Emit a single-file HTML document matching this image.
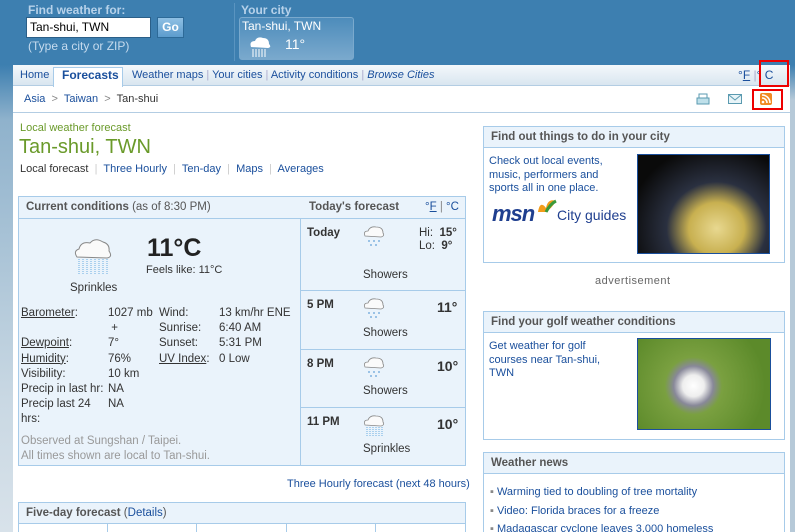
<!DOCTYPE html>
<html><head><meta charset="utf-8"><style>
*{margin:0;padding:0;box-sizing:border-box}
html,body{width:795px;height:532px;overflow:hidden}
body{position:relative;background:#fff;font-family:"Liberation Sans",Tahoma,sans-serif;font-size:11px;color:#333}
.a{position:absolute;white-space:nowrap}
a,.l{color:#1a4f9c;text-decoration:none}
u{text-decoration:underline}
.box{position:absolute;border:1px solid #a7cbe9;background:#fff}
.hd{background:#eaf3fb;border-bottom:1px solid #a7cbe9;height:21px;font-weight:bold;color:#555;font-size:11.5px;padding:4px 7px}
.cloud{position:absolute}
</style></head><body>
<div class="a" style="left:0;top:0;width:13px;height:532px;background:linear-gradient(#3d7fb0 0,#3d7fb0 65px,#8fb2cc 120px,#c9d8e3 400px,#d8e2ea 532px)"></div>
<div class="a" style="left:790px;top:0;width:5px;height:532px;background:linear-gradient(#3d7fb0 0,#3d7fb0 65px,#b6c9d8 100px)"></div>
<div class="a" style="left:13px;top:0;width:777px;height:65px;background:#3d7fb0"></div>
<div class="a" style="left:28px;top:3px;color:#b7d2ea;font-weight:bold;font-size:12px">Find weather for:</div>
<div class="a" style="left:26px;top:17px;width:125px;height:21px;background:#fff;border:1px solid #2b5f88;padding:2px 3px;font-size:12px;color:#000">Tan-shui, TWN</div>
<div class="a" style="left:157px;top:17px;width:27px;height:21px;background:linear-gradient(#8fc0e4,#5c9ccd);border:1px solid #2d6a98;color:#fff;font-weight:bold;font-size:12px;text-align:center;line-height:19px">Go</div>
<div class="a" style="left:28px;top:39px;color:#c6dbee;font-size:12px">(Type a city or ZIP)</div>
<div class="a" style="left:234px;top:3px;width:1px;height:58px;background:#5a94c0"></div>
<div class="a" style="left:241px;top:3px;color:#b7d2ea;font-weight:bold;font-size:12px">Your city</div>
<div class="a" style="left:239px;top:17px;width:115px;height:43px;border:1px solid #7aa9cd;border-radius:3px;background:linear-gradient(#4d8cbb,#7aa9cd)"></div>
<div class="a" style="left:242px;top:19px;color:#fff;font-size:12px">Tan-shui, TWN</div>
<div class="a" style="left:285px;top:36px;color:#fff;font-size:14px">11°</div>
<svg class="cloud" style="left:248px;top:36px" width="24" height="22"><path d="M3 11 Q1 5 7 5 Q9 0 15 2 Q21 2 21 8 Q24 11 20 12 Z" fill="#fff"/><g stroke="#fff" stroke-width="1"><path d="M5 13v8M8 13v8M11 13v8M14 13v8M17 13v8"/></g></svg>
<div class="a" style="left:13px;top:65px;width:777px;height:21px;background:linear-gradient(#f4f8fb,#d9e6f0);border-bottom:1px solid #b3cde3"></div>
<div class="a" style="left:53px;top:67px;width:70px;height:20px;background:#fff;border:1px solid #a7cbe9;border-bottom:none"></div>
<div class="a" style="top:69px;left:20px;font-size:11px;color:#1a4f9c">Home</div>
<div class="a" style="top:68px;left:62px;font-size:12px;font-weight:bold;color:#1a4f9c">Forecasts</div>
<div class="a" style="top:69px;left:132px;font-size:11px;color:#1a4f9c;word-spacing:0">Weather maps <span style="color:#aac">|</span> Your cities <span style="color:#aac">|</span> Activity conditions <span style="color:#aac">|</span> <i>Browse Cities</i></div>
<div class="a" style="top:68px;left:738px;font-size:12px;color:#1a4f9c">°<u>F</u> <span style="color:#aac">|</span>° C</div>
<div class="a" style="left:759px;top:60px;width:30px;height:27px;border:2px solid #e00"></div>
<div class="a" style="top:93px;left:24px;font-size:11px"><span class="l">Asia</span> <span style="color:#888">&nbsp;&gt;&nbsp;</span> <span class="l">Taiwan</span> <span style="color:#888">&nbsp;&gt;&nbsp;</span> Tan-shui</div>
<div class="a" style="left:13px;top:112px;width:777px;height:1px;background:#b3cde3"></div>
<svg class="a" style="left:696px;top:93px" width="14" height="12"><rect x="3" y="1" width="8" height="4" fill="#fff" stroke="#5a9ab0"/><rect x="1" y="5" width="12" height="6" fill="#bfe0ea" stroke="#5a9ab0"/></svg>
<svg class="a" style="left:728px;top:94px" width="14" height="10"><rect x=".5" y=".5" width="13" height="9" fill="#e8f4f8" stroke="#5a9ab0"/><path d="M1 1l6 5 6-5" fill="none" stroke="#5a9ab0"/></svg>
<div class="a" style="left:752px;top:89px;width:31px;height:21px;border:2px solid #e00"></div>
<svg class="a" style="left:760px;top:93px" width="12" height="12"><rect width="12" height="12" rx="2" fill="#f08a24"/><circle cx="3" cy="9" r="1.3" fill="#fff"/><path d="M2 5a5 5 0 0 1 5 5M2 2a8 8 0 0 1 8 8" fill="none" stroke="#fff" stroke-width="1.6"/></svg>
<div class="a" style="left:20px;top:122px;color:#6a9a2a;font-size:11px">Local weather forecast</div>
<div class="a" style="left:19px;top:136px;color:#6a9a2a;font-size:20px">Tan-shui, TWN</div>
<div class="a" style="left:20px;top:163px;font-size:11px">Local forecast <span style="color:#ccc">&nbsp;|&nbsp;</span> <u class="l">Three Hourly</u> <span style="color:#ccc">&nbsp;|&nbsp;</span> <u class="l">Ten-day</u> <span style="color:#ccc">&nbsp;|&nbsp;</span> <u class="l">Maps</u> <span style="color:#ccc">&nbsp;|&nbsp;</span> <u class="l">Averages</u></div>
<div class="box" style="left:18px;top:196px;width:448px;height:270px;background:#eaf3fb">
 <div class="hd" style="height:22px">Current conditions <span style="font-weight:normal">(as of 8:30 PM)</span><span style="position:absolute;left:290px">Today's forecast</span><span style="position:absolute;left:406px;font-weight:normal;color:#1a4f9c">°<u>F</u> <span style="color:#888">|</span> °C</span></div>
</div>
<div class="a" style="left:300px;top:218px;width:1px;height:247px;background:#a7cbe9"></div>
<div class="a" style="left:301px;top:290px;width:164px;height:1px;background:#a7cbe9"></div>
<div class="a" style="left:301px;top:349px;width:164px;height:1px;background:#a7cbe9"></div>
<div class="a" style="left:301px;top:407px;width:164px;height:1px;background:#a7cbe9"></div>
<svg class="cloud" style="left:73px;top:237px" width="40" height="40"><path d="M4 20 Q0 14 6 12 Q8 4 17 6 Q22 0 30 5 Q37 7 36 14 Q40 20 34 21 Z" fill="#fafafa" stroke="#888"/><g stroke="#6aaee0" stroke-width="1" stroke-dasharray="1 1"><path d="M6 22v15M10 22v15M14 22v15M18 22v15M22 22v15M26 22v15M30 22v15M34 22v15"/></g></svg>
<div class="a" style="left:70px;top:282px;font-size:11.5px">Sprinkles</div>
<div class="a" style="left:147px;top:234px;font-size:25px;font-weight:bold;color:#222">11°C</div>
<div class="a" style="left:146px;top:264px;font-size:11px">Feels like: 11°C</div>
<div class="a" style="left:21px;top:306px;line-height:15.2px;font-size:11.5px"><u>Barometer</u>:<br><br><u>Dewpoint</u>:<br><u>Humidity</u>:<br>Visibility:<br>Precip in last hr:<br>Precip last 24<br>hrs:</div>
<div class="a" style="left:108px;top:306px;line-height:15.2px;font-size:11.5px">1027 mb<br>&nbsp;+<br>7°<br>76%<br>10 km<br>NA<br>NA</div>
<div class="a" style="left:159px;top:306px;line-height:15.2px;font-size:11.5px">Wind:<br>Sunrise:<br>Sunset:<br><u>UV Index</u>:</div>
<div class="a" style="left:219px;top:306px;line-height:15.2px;font-size:11.5px">13 km/hr ENE<br>6:40 AM<br>5:31 PM<br>0 Low</div>
<div class="a" style="left:21px;top:434px;line-height:15px;color:#999;font-size:11.5px">Observed at Sungshan / Taipei.<br>All times shown are local to Tan-shui.</div>
<div class="a" style="left:307px;top:227px;font-weight:bold;font-size:11.5px">Today</div>
<div class="a" style="left:419px;top:227px;font-size:11.5px;line-height:13px">Hi: &nbsp;<b>15°</b><br>Lo: &nbsp;<b>9°</b></div>
<div class="a" style="left:363px;top:269px;font-size:11.5px">Showers</div>
<div class="a" style="left:307px;top:299px;font-weight:bold;font-size:11.5px">5 PM</div>
<div class="a" style="left:437px;top:299px;font-weight:bold;font-size:14px">11°</div>
<div class="a" style="left:363px;top:327px;font-size:11.5px">Showers</div>
<div class="a" style="left:307px;top:358px;font-weight:bold;font-size:11.5px">8 PM</div>
<div class="a" style="left:437px;top:358px;font-weight:bold;font-size:14px">10°</div>
<div class="a" style="left:363px;top:385px;font-size:11.5px">Showers</div>
<div class="a" style="left:307px;top:416px;font-weight:bold;font-size:11.5px">11 PM</div>
<div class="a" style="left:437px;top:416px;font-weight:bold;font-size:14px">10°</div>
<div class="a" style="left:363px;top:443px;font-size:11.5px">Sprinkles</div>
<svg class="cloud" style="left:363px;top:225px" width="22" height="22"><path d="M2 11 Q0 6 5 6 Q7 1 13 2 Q20 2 20 8 Q22 11 18 12 Z" fill="#fafafa" stroke="#888" stroke-width=".8"/><g stroke="#4a90d0"><path d="M6 15v2M11 15v2M16 15v2M8 19v2M13 19v2"/></g></svg>
<svg class="cloud" style="left:363px;top:297px" width="22" height="22"><path d="M2 11 Q0 6 5 6 Q7 1 13 2 Q20 2 20 8 Q22 11 18 12 Z" fill="#fafafa" stroke="#888" stroke-width=".8"/><g stroke="#4a90d0"><path d="M6 15v2M11 15v2M16 15v2M8 19v2M13 19v2"/></g></svg>
<svg class="cloud" style="left:363px;top:356px" width="22" height="22"><path d="M2 11 Q0 6 5 6 Q7 1 13 2 Q20 2 20 8 Q22 11 18 12 Z" fill="#fafafa" stroke="#888" stroke-width=".8"/><g stroke="#4a90d0"><path d="M6 15v2M11 15v2M16 15v2M8 19v2M13 19v2"/></g></svg>
<svg class="cloud" style="left:363px;top:414px" width="22" height="24"><path d="M2 11 Q0 6 5 6 Q7 1 13 2 Q20 2 20 8 Q22 11 18 12 Z" fill="#fafafa" stroke="#888" stroke-width=".8"/><g stroke="#6aaee0" stroke-dasharray="1 1"><path d="M4 13v9M7 13v9M10 13v9M13 13v9M16 13v9M19 13v9"/></g></svg>
<div class="a l" style="left:287px;top:478px;font-size:11px">Three Hourly forecast (next 48 hours)</div>
<div class="box" style="left:18px;top:502px;width:448px;height:40px;background:#fff">
 <div class="hd" style="height:21px">Five-day forecast <span style="font-weight:normal">(<u class="l">Details</u>)</span></div>
</div>
<div class="a" style="left:107px;top:523px;width:1px;height:10px;background:#a7cbe9"></div>
<div class="a" style="left:196px;top:523px;width:1px;height:10px;background:#a7cbe9"></div>
<div class="a" style="left:286px;top:523px;width:1px;height:10px;background:#a7cbe9"></div>
<div class="a" style="left:375px;top:523px;width:1px;height:10px;background:#a7cbe9"></div>
<div class="box" style="left:483px;top:126px;width:302px;height:137px"><div class="hd">Find out things to do in your city</div></div>
<div class="a l" style="left:489px;top:155px;line-height:13.5px;font-size:11px">Check out local events,<br>music, performers and<br>sports all in one place.</div>
<div class="a" style="left:492px;top:201px;font-size:22px;font-weight:bold;font-style:italic;color:#1f3f8f;letter-spacing:-1px">msn</div>
<svg class="a" style="left:536px;top:198px" width="22" height="16"><path d="M2 14 Q4 2 10 10 Q12 0 20 3 Q16 10 10 14Z" fill="#f39c1a"/><path d="M10 14 Q14 6 20 3" stroke="#3a9a3a" stroke-width="3" fill="none"/></svg>
<div class="a" style="left:557px;top:207px;font-size:14px;color:#1f3f8f">City guides</div>
<div class="a" style="left:637px;top:154px;width:133px;height:100px;border:1px solid #1a4f9c;background:radial-gradient(ellipse at 60% 75%,#e8d890 0,#c8b050 25%,#2a3040 45%,#0a0a0a 80%)"></div>
<div class="a" style="left:595px;top:275px;color:#666;font-size:11px;letter-spacing:.5px">advertisement</div>
<div class="box" style="left:483px;top:311px;width:302px;height:129px"><div class="hd">Find your golf weather conditions</div></div>
<div class="a l" style="left:489px;top:340px;line-height:13.5px;font-size:11px">Get weather for golf<br>courses near Tan-shui,<br>TWN</div>
<div class="a" style="left:637px;top:338px;width:134px;height:92px;border:1px solid #1a4f9c;background:radial-gradient(circle at 42% 52%,#fff 0,#eee 12%,#889 22%,#7aa040 32%,#5c8a2a 80%)"></div>
<div class="box" style="left:483px;top:452px;width:302px;height:90px"><div class="hd">Weather news</div></div>
<div class="a l" style="left:490px;top:483px;line-height:18.5px;font-size:11px"><span style="color:#888">▪</span> Warming tied to doubling of tree mortality<br><span style="color:#888">▪</span> Video: Florida braces for a freeze<br><span style="color:#888">▪</span> Madagascar cyclone leaves 3,000 homeless</div>
</body></html>
